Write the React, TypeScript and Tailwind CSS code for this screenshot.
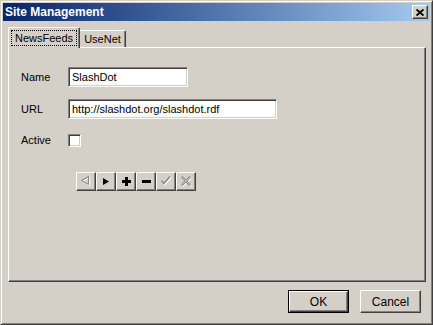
import React from "react";

const raised =
  "border border-t-white border-l-white border-r-[#404040] border-b-[#404040] shadow-[inset_-1px_-1px_#808080]";
const sunken =
  "border border-t-[#808080] border-l-[#808080] border-r-white border-b-white shadow-[inset_1px_1px_#404040,inset_-1px_-1px_#d4d0c8]";

function ToolButton({ children }: { children: React.ReactNode }) {
  return (
    <div className={`w-[20px] h-[19px] flex items-center justify-center bg-[#d4d0c8] ${raised}`}>
      {children}
    </div>
  );
}

export default function App() {
  return (
    <div
      className="w-[433px] h-[325px] bg-[#d4d0c8] p-[2px] border border-t-[#d4d0c8] border-l-[#d4d0c8] border-r-[#404040] border-b-[#404040] shadow-[inset_1px_1px_#fff,inset_-1px_-1px_#808080] flex flex-col text-[11px] text-black"
      style={{ fontFamily: '"Liberation Sans", Arial, sans-serif' }}
    >
      {/* title bar */}
      <div className="h-[18px] flex items-center justify-between bg-linear-to-r from-[#0a246a] to-[#a6caf0] pl-[2px] pr-[2px]">
        <span className="text-white font-bold text-[12px] leading-none">Site Management</span>
        <div className={`w-[16px] h-[14px] bg-[#d4d0c8] flex items-center justify-center ${raised}`}>
          <svg width="8" height="7" viewBox="0 0 8 7">
            <path d="M0.5 0.5 L7.5 6.5 M7.5 0.5 L0.5 6.5" stroke="#000" strokeWidth="1.9" />
          </svg>
        </div>
      </div>

      {/* tabs */}
      <div className="mt-[6px] ml-[5px] h-[20px] flex items-end">
        <div className="relative z-10 w-[72px] h-[21px] -mb-px bg-[#d4d0c8] border-t border-l border-r border-t-white border-l-white border-r-[#404040] rounded-t-[2px] shadow-[inset_-1px_0_#808080] pl-[2px] pt-[2px]">
          <div className="w-[66px] h-[16px] border border-dotted border-black flex items-center justify-center leading-none">
            NewsFeeds
          </div>
        </div>
        <div className="w-[46px] h-[17px] bg-[#d4d0c8] border-t border-r border-t-white border-r-[#404040] rounded-t-[2px] shadow-[inset_-1px_0_#808080] flex items-center justify-center leading-none">
          UseNet
        </div>
      </div>

      {/* panel */}
      <div className="ml-[5px] w-[418px] h-[235px] border border-t-white border-l-white border-r-[#404040] border-b-[#404040] shadow-[inset_-1px_-1px_#808080] flex flex-col pl-[12px]">
        <div className="mt-[19px] flex items-center">
          <span className="w-[47px]">Name</span>
          <div className={`w-[120px] h-[20px] bg-white ${sunken} flex items-center pl-[3px]`}>SlashDot</div>
        </div>
        <div className="mt-[12px] flex items-center">
          <span className="w-[47px]">URL</span>
          <div className={`w-[209px] h-[20px] bg-white ${sunken} flex items-center pl-[3px]`}>
            http://slashdot.org/slashdot.rdf
          </div>
        </div>
        <div className="mt-[13px] flex items-center">
          <span className="w-[47px]">Active</span>
          <div className={`w-[13px] h-[13px] bg-white ${sunken}`} />
        </div>

        <div className="mt-[23px] ml-[55px] flex">
          <ToolButton>
            <svg width="10" height="11" viewBox="0 0 10 11">
              <path d="M8.5 1.5 L8.5 9.5 L1.5 5.5 Z" fill="none" stroke="#fff" />
              <path d="M7.5 0.5 L7.5 8.5 L0.5 4.5 Z" fill="none" stroke="#808080" />
            </svg>
          </ToolButton>
          <ToolButton>
            <svg width="6" height="7" viewBox="0 0 6 7">
              <path d="M0 0 L6 3.5 L0 7 Z" fill="#000" />
            </svg>
          </ToolButton>
          <ToolButton>
            <svg width="9" height="9" viewBox="0 0 9 9">
              <path d="M3 0 H6 V3 H9 V6 H6 V9 H3 V6 H0 V3 H3 Z" fill="#000" />
            </svg>
          </ToolButton>
          <ToolButton>
            <svg width="9" height="3" viewBox="0 0 9 3">
              <rect width="9" height="3" fill="#000" />
            </svg>
          </ToolButton>
          <ToolButton>
            <svg width="11" height="10" viewBox="0 0 11 10">
              <path d="M1.5 5.5 L4 8.5 L10 1.5" fill="none" stroke="#fff" strokeWidth="1.2" />
              <path d="M0.5 4.5 L3 7.5 L9 0.5" fill="none" stroke="#808080" strokeWidth="1.2" />
            </svg>
          </ToolButton>
          <ToolButton>
            <svg width="11" height="11" viewBox="0 0 11 11">
              <path d="M1.5 1.5 L10 10 M10 1.5 L1.5 10" fill="none" stroke="#fff" strokeWidth="2.2" />
              <path d="M0.8 0.8 L9.2 9.2 M9.2 0.8 L0.8 9.2" fill="none" stroke="#808080" strokeWidth="2.2" />
              <path d="M1.2 1.2 L8.8 8.8 M8.8 1.2 L1.2 8.8" fill="none" stroke="#d4d0c8" strokeWidth="0.8" />
            </svg>
          </ToolButton>
        </div>
      </div>

      {/* buttons */}
      <div className="mt-[8px] pr-[9px] flex justify-end gap-[11px]">
        <div className="w-[61px] h-[23px] border border-black">
          <div className={`w-full h-full bg-[#d4d0c8] ${raised} flex items-center justify-center text-[12px]`}>OK</div>
        </div>
        <div className={`w-[61px] h-[23px] bg-[#d4d0c8] ${raised} flex items-center justify-center text-[12px]`}>Cancel</div>
      </div>
    </div>
  );
}
